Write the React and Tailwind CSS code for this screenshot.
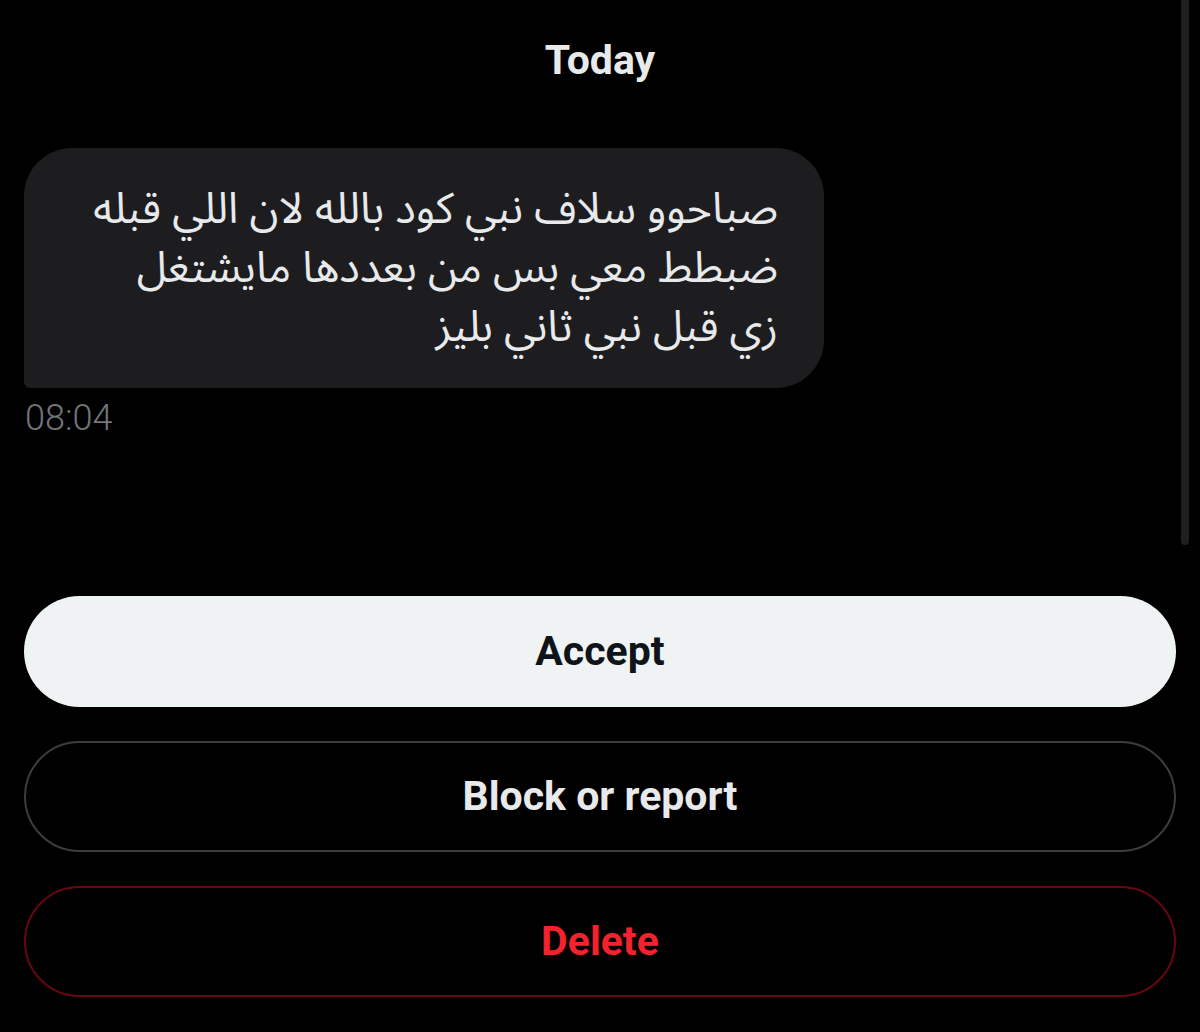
import React from 'react';

const sans = { fontFamily: 'Roboto, "Liberation Sans", sans-serif' };
const arabic = { fontFamily: '"Noto Sans Arabic", "DejaVu Sans", "Noto Sans", sans-serif' };

const lines = [
  'صباحوو سلاف نبي كود بالله لان اللي قبله',
  'ضبطط معي بس من بعددها مايشتغل',
  'زي قبل نبي ثاني بليز',
];

export default function App() {
  return (
    <div className="relative w-[1200px] h-[1032px] bg-black overflow-hidden" style={sans}>
      {/* scroll indicator */}
      <div className="absolute right-[11px] top-0 w-[8px] h-[545px] rounded-b-full bg-[#1f1f1f]" />

      <div className="flex flex-col px-[24px]">
        <div className="pt-[36px] h-[84px] text-center text-[41px] leading-[48px] font-bold text-[#e7e9ea]">Today</div>

        <div className="mt-[64px] w-[800px] h-[240px] rounded-[48px] rounded-bl-[6px] bg-[#1d1d20] pt-[32px] pr-[46px] pl-[30px]">
          <div dir="rtl" className="text-right text-[43px] leading-[59px] text-[#e7e9ea]" style={arabic}>
            {lines.map((l) => (
              <div key={l} className="whitespace-nowrap">{l}</div>
            ))}
          </div>
        </div>

        <div className="mt-[10px] pl-[1px] text-[36px] leading-[40px] font-light text-[#71767b]">08:04</div>

        <div className="mt-[158px] flex flex-col gap-[34px]">
          <button className="h-[111px] w-full rounded-full bg-[#eff3f4] text-[41px] font-bold text-[#0f1419]">
            Accept
          </button>
          <button className="h-[111px] w-full rounded-full border-[2px] border-[#3a3d40] text-[41px] font-bold text-[#e7e9ea]">
            Block or report
          </button>
          <button className="h-[111px] w-full rounded-full border-[2px] border-[#67070f] text-[41px] font-bold text-[#f4212e]">
            Delete
          </button>
        </div>
      </div>
    </div>
  );
}
